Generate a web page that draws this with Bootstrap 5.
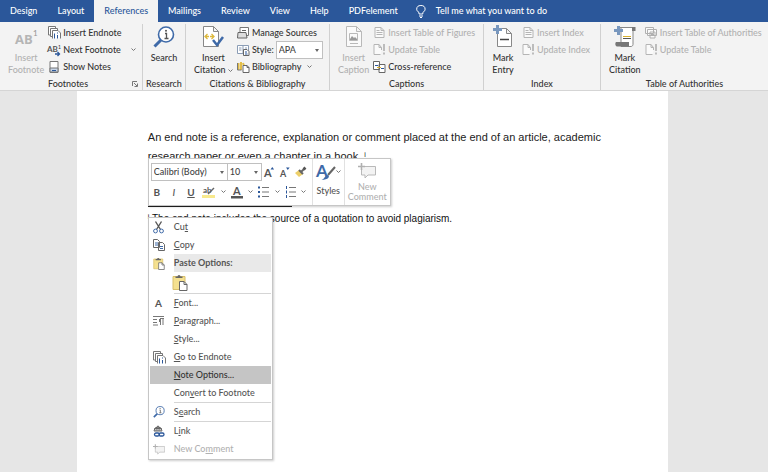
<!DOCTYPE html>
<html lang="en">
<head>
<meta charset="utf-8">
<meta name="viewport" content="width=device-width, initial-scale=1">
<title>Document - Word</title>
<link href="https://cdn.jsdelivr.net/npm/bootstrap@5.3.0/dist/css/bootstrap.min.css" rel="stylesheet">
<style>
:root{--blue:#2b579a;--dim:#b1b1b1}
body{font:9px/12px Lato,"Open Sans",sans-serif;font-weight:500;color:#333;background:#e6e6e6;min-height:100vh}
button{font:inherit;color:inherit;background:none;border:0;padding:0;white-space:nowrap}
button:disabled{color:var(--dim)}
svg{display:block;flex:none;overflow:visible}
.tabs{background:var(--blue);height:22px}
.tabs .nav-link{color:#fff;padding:0 10px;line-height:22px;font-size:9px;border-radius:0;white-space:nowrap}
.tabs .nav-link.active{background:#f3f3f3;color:var(--blue)}
.tell{color:#fff;line-height:22px;gap:10px}
.ribbon{background:#f3f3f3;border-bottom:1px solid #d5d5d5;padding:2px 0 0}
.group{border-right:1px solid #d0d0d0;min-height:66px;padding:0 4px}
.group:last-child{border-right:0}
.g-notes{flex:0 0 143px}.g-research{flex:0 0 43px}.g-cite{flex:0 0 144px}.g-cap{flex:0 0 154px}.g-index{flex:0 0 117px}
.group-title{font-size:9px;line-height:12px;text-align:center}
.cmd-list button,.cmd-row{height:17px;display:flex;align-items:center;gap:2px}
.big{display:flex;flex-direction:column;align-items:center;line-height:12px}
.ribbon .big>svg{margin-bottom:1px}
.pick{position:relative}
.pick::after{content:"";position:absolute;right:4px;top:50%;margin-top:-1px;border:2px solid transparent;border-top:3px solid #666;border-bottom:0;pointer-events:none}
.pick select{appearance:none;border:1px solid #c0c0c0;background:#fff;color:#444;font:inherit;height:18px;padding:0 2px;border-radius:0;width:100%}
.cite-pick{width:47px}
.page{background:#fff;margin-left:10%;width:77%;min-height:calc(100vh - 91px);position:relative;padding:37px 60px 0 71px;font-family:"Liberation Sans",Arial,sans-serif;color:#222}
.body-text{font-size:11px;line-height:19px;margin:0}
.body-text sup,.note sup{font-size:7px}
.rule{width:144px;border-top:1px solid #222;margin:40px 0 6px}
.note{font-size:10px;margin:0;line-height:12px;color:#111}
.floating{position:absolute;background:#fff;border:1px solid #c6c6c6;box-shadow:1px 1px 2px #0003;font-family:Lato,"Open Sans",sans-serif;color:#555}
.mini{left:71px;top:67px;width:243px;height:48px}
.mini-edit{width:163px;padding:4px 2px 0}
.mini-row{height:18px}
.mini-row+.mini-row{margin-top:2px}
.mini-row .glyph{width:12px;text-align:center;font-size:10px}
.f-name{width:77px}.f-size{width:35px;margin-left:-1px}
.mini-part{border-left:1px solid #e1e1e1}
.styles{width:32px}
.comment-label{line-height:10px;margin-top:3px}
.menu{left:71px;top:126px;width:125px;padding:0 1px 1px}
.menu button,.menu .heading{display:flex;align-items:center;height:18px;width:100%;text-align:left}
.menu .ico{width:24px;display:flex;padding-left:3px;flex:none}
.menu .heading b{background:#e9e9e9;flex:1;line-height:18px;color:#555}
.menu .chosen{background:#c5c5c5;color:#333}
.menu .paste{height:21px;padding-left:22px}
.menu hr{margin:0 0 0 24px;border-top:1px solid #d5d5d5;opacity:1}
</style>
<script src="https://cdn.jsdelivr.net/npm/bootstrap@5.3.0/dist/js/bootstrap.bundle.min.js"></script>
</head>
<body>
<svg width="0" height="0" class="position-absolute" aria-hidden="true">
<defs>
<symbol id="endnote" viewBox="0 0 13 13"><g fill="#fff" stroke="#777"><path d="M3 9H.5V.5h7V2M5 10.500H2.500v-8h7V4"/><path d="M4.500 12.500v-8H10l2.500 2.500v5.500"/></g><path d="M6.500 7.500v5M9.500 9v3.500" stroke="#2b579a"/><path d="M9 7h1" stroke="#2b579a"/></symbol>
<symbol id="drop" viewBox="0 0 5 4"><path d="M.5.5l2 2 2-2" fill="none" stroke="#777"/></symbol>
<symbol id="magnify" viewBox="0 0 22 22"><path d="M1.500 20.500L8 14" stroke="#3f6aa8" stroke-width="3"/><circle cx="13" cy="8.500" r="7.500" fill="#fff" stroke="#3f6aa8" stroke-width="1.600"/><path d="M12 7.500h1.500v5M11.500 12.500h4" stroke="#555" fill="none" stroke-width="1.300"/><circle cx="13" cy="4.800" r="1" fill="#555"/></symbol>
<symbol id="doc" viewBox="0 0 10 11"><path d="M.5.500h6l3 3v7h-9zM6.500.500v3h3" fill="#fafafa" stroke="#b5b5b5"/><path d="M2 5.500h6M2 7.500h6M2 3.500h3" stroke="#b5b5b5"/></symbol>
<symbol id="update" viewBox="0 0 12 11"><path d="M7 10.500H.5V.500h5l2.500 3V6M5.500.500v3H8" fill="#fafafa" stroke="#b5b5b5"/><path d="M10.500 0v7M10.500 8.500v2" stroke="#aaa" stroke-width="1.500"/></symbol>
<symbol id="clip" viewBox="0 0 16 17"><path d="M1 2.500h12v13H1z" fill="#f4e08f" stroke="#d9c06c"/><path d="M3.500 4V2.500H5.500a1.500 1.500 0 0 1 3 0h2V4z" fill="#666"/><path d="M7.500 7.500h4.500l3 3v6H7.500z" fill="#fff" stroke="#666"/><path d="M12 7.500v3h3" fill="none" stroke="#666"/></symbol>
<symbol id="comment" viewBox="0 0 18 16"><path d="M6 3.500h11.500v8.500H10l-3 3v-3H3.500V7" fill="#f3f3f3" stroke="#b9b9b9"/><path d="M3.500 0v7M0 3.500h7" stroke="#b0b0b0" stroke-width="1.600"/></symbol>
<symbol id="plusmark" viewBox="0 0 9 9"><path d="M4.500 0v9M0 4.500h9" stroke="#7897be" stroke-width="3"/></symbol>
</defs></svg>

<header>
<nav class="tabs nav flex-nowrap" aria-label="Ribbon tabs">
<a class="nav-link" href="#">Design</a><a class="nav-link" href="#">Layout</a><a class="nav-link active" href="#" aria-current="page">References</a><a class="nav-link" href="#">Mailings</a><a class="nav-link" href="#">Review</a><a class="nav-link" href="#">View</a><a class="nav-link" href="#">Help</a><a class="nav-link" href="#">PDFelement</a>
<button class="tell d-flex align-items-center ms-2" type="button"><svg width="10" height="13" viewBox="0 0 10 13" fill="none" stroke="#fff"><path d="M3 9V7.500C1.500 6.500.7 5.500.7 4.200a4.200 3.700 0 0 1 8.400 0c0 1.300-.8 2.300-2.300 3.300V9zM3 11h4M4 12.500h2"/></svg>Tell me what you want to do</button>
</nav>
<div class="ribbon d-flex">
<section class="group g-notes d-flex flex-column justify-content-between">
 <div class="d-flex gap-1">
  <button class="big ms-1" type="button" disabled><svg width="22" height="27" viewBox="0 0 22 27"><text x="0" y="20" font-size="13" font-family="Open Sans" font-weight="700" fill="#b5b5b5">AB</text><text x="18" y="12" font-size="8" fill="#999">1</text></svg><span>Insert<br>Footnote</span></button>
  <div class="cmd-list">
   <button type="button"><svg width="13" height="13"><use href="#endnote"/></svg>Insert Endnote</button>
   <button type="button"><svg width="13" height="12" viewBox="0 0 13 12"><text x="-1" y="8" font-size="8" font-weight="700" fill="#555">AB</text><text x="10" y="5" font-size="5" fill="#333">1</text><path d="M7 10h4M9.500 8l2 2-2 2" fill="none" stroke="#2b579a" stroke-width="1.300"/></svg>Next Footnote<svg class="ms-2" width="5" height="4"><use href="#drop"/></svg></button>
   <button type="button"><svg width="13" height="12" viewBox="0 0 13 12"><path d="M2 .500h8v11H2z" fill="#fff" stroke="#777"/><path d="M2 7h8v4H2z" fill="#c7d5e8" stroke="#777"/><path d="M4 9.500h4" stroke="#2b579a"/></svg>Show Notes</button>
  </div>
 </div>
 <div class="d-flex align-items-center"><span class="group-title flex-fill">Footnotes</span><button type="button" aria-label="Footnote settings"><svg width="6" height="6" viewBox="0 0 6 6" fill="none" stroke="#777"><path d="M.5 5V.500H5M2 2l3 3M5.500 2.500v3h-3"/></svg></button></div>
</section>
<section class="group g-research d-flex flex-column justify-content-between px-0">
 <button class="big" type="button"><svg width="22" height="27" viewBox="0 -2 22 27"><use href="#magnify" width="22" height="22"/></svg>Search</button>
 <span class="group-title">Research</span>
</section>
<section class="group g-cite d-flex flex-column justify-content-between">
 <div class="d-flex gap-1">
  <button class="big ms-1" type="button"><svg width="22" height="27" viewBox="0 0 22 27"><path d="M1.500 2.500h10l5 5v15h-15zM11.500 2.500v5h5" fill="#fff" stroke="#888"/><path d="M3 12.500h4M12 12.500h-4M5.500 10l-2.500 2.500 2.500 2.500M9.500 10l2.500 2.500-2.500 2.500" fill="none" stroke="#dcb83c" stroke-width="1.300"/><path d="M11 16l4 5 6-8" fill="none" stroke="#3f6aa8" stroke-width="2.500"/></svg><span>Insert<br>Citation <svg class="d-inline-block" width="5" height="4"><use href="#drop"/></svg></span></button>
  <div class="cmd-list">
   <button type="button"><svg width="13" height="12" viewBox="0 0 13 12"><path d="M3 .500h8.500v8H3z" fill="#fff" stroke="#777"/><path d="M5 3.500h4M1 5.500h8l1 5.500H.5z" fill="#ddd" stroke="#666"/></svg>Manage Sources</button>
   <div class="cmd-row"><svg width="13" height="12" viewBox="0 0 13 12"><path d="M.5 1.500h11v8H.5zM6 1.500v8M2 4h2.500M2 6h2.500M8 4h2" fill="#fff" stroke="#8a9cb5"/><path d="M6.500 5.500h3.500l2 2v4H6.500z" fill="#fff" stroke="#666"/><path d="M8 8h2M8 10h2.500" stroke="#2b579a"/></svg><label for="cite-style">Style:</label><span class="pick cite-pick"><select id="cite-style"><option>APA</option></select></span></div>
   <button type="button"><svg width="13" height="12" viewBox="0 0 13 12"><path d="M1.500 2v7M4 1v8M6 2l1 3" stroke="#e2bd48" stroke-width="2"/><path d="M.5 2v7h4" fill="none" stroke="#777"/><path d="M6 4.500h4l2 2v5H6zM10 4.500v2h2" fill="#fff" stroke="#666"/></svg>Bibliography<svg class="ms-1" width="5" height="4"><use href="#drop"/></svg></button>
  </div>
 </div>
 <span class="group-title">Citations &amp; Bibliography</span>
</section>
<section class="group g-cap d-flex flex-column justify-content-between">
 <div class="d-flex gap-1">
  <button class="big ms-1" type="button" disabled><svg width="18" height="27" viewBox="0 0 18 27"><path d="M1.500 2.500h10l5 5v15h-15zM11.500 2.500v5h5M4.500 9.500h8v7h-8zM5 19.500h8" fill="#fafafa" stroke="#b9b9b9"/><path d="M5 15l2-3 2 2 1-1 2 2v1H5z" fill="#999"/></svg><span>Insert<br>Caption</span></button>
  <div class="cmd-list">
   <button type="button" disabled><svg width="13" height="11"><use href="#doc"/></svg>Insert Table of Figures</button>
   <button type="button" disabled><svg width="13" height="11"><use href="#update"/></svg>Update Table</button>
   <button type="button"><svg width="13" height="12" viewBox="0 0 13 12"><path d="M.5.500h6v8h-6zM6 3.500h6v8H6z" fill="#fff" stroke="#666"/><path d="M2 4.500h3M8 7.500h3" stroke="#2b579a"/><path d="M4 6.500h4" stroke="#d8b12f"/></svg>Cross-reference</button>
  </div>
 </div>
 <span class="group-title">Captions</span>
</section>
<section class="group g-index d-flex flex-column justify-content-between">
 <div class="d-flex gap-1">
  <button class="big ms-1" type="button"><svg width="22" height="27" viewBox="0 0 22 27"><path d="M5.500 4.500h9l5 5v13h-14zM14.500 4.500v5h5" fill="#fff" stroke="#888"/><path d="M8 15.500h9" stroke="#444" stroke-width="1.500"/><use href="#plusmark" x="1" y="1" width="9" height="9"/></svg><span>Mark<br>Entry</span></button>
  <div class="cmd-list ms-1">
   <button type="button" disabled><svg width="13" height="11"><use href="#doc"/></svg>Insert Index</button>
   <button type="button" disabled><svg width="13" height="11"><use href="#update"/></svg>Update Index</button>
  </div>
 </div>
 <span class="group-title">Index</span>
</section>
<section class="group flex-fill d-flex flex-column justify-content-between">
 <div class="d-flex gap-1">
  <button class="big ms-1" type="button"><svg width="22" height="27" viewBox="0 0 22 27"><path d="M6 3.500h15c-2 0-2 2-2 3v14c0 1-1 2-2 2H7V4" fill="#fff" stroke="#888"/><path d="M18 3h3.500v4H18zM2 18h13v4.500H3C1 22 1 19 2 18z" fill="#777"/><path d="M9 12.500h8" stroke="#d8b12f"/><path d="M9 14.500h8" stroke="#555"/><use href="#plusmark" x="0" y="2" width="9" height="9"/></svg><span>Mark<br>Citation</span></button>
  <div class="cmd-list">
   <button type="button" disabled><svg width="13" height="12" viewBox="0 0 13 12" fill="#fafafa" stroke="#b0b0b0"><path d="M.5.500h8v6h-8zM2.500 2.500h9v6h-9zM5 5h5v6H5zM6 7.500h3"/></svg>Insert Table of Authorities</button>
   <button type="button" disabled><svg width="13" height="11"><use href="#update"/></svg>Update Table</button>
  </div>
 </div>
 <span class="group-title">Table of Authorities</span>
</section>
</div>
</header>

<main class="page">
<p class="body-text">An end note is a reference, explanation or comment placed at the end of an article, academic research paper or even a chapter in a book. <sup>i</sup></p>
<div class="rule"></div>
<p class="note"><sup>i</sup> The end note includes the source of a quotation to avoid plagiarism.</p>

<div class="floating mini d-flex" role="toolbar" aria-label="Formatting">
 <div class="mini-edit">
  <div class="mini-row d-flex align-items-center">
   <span class="pick f-name"><select aria-label="Font"><option>Calibri (Body)</option></select></span>
   <span class="pick f-size"><select aria-label="Font size"><option>10</option></select></span>
   <div class="d-flex flex-fill justify-content-around align-items-center">
   <button type="button" aria-label="Grow font"><svg width="10" height="12" viewBox="0 0 10 12"><text x="0" y="11" font-size="11" font-weight="700" fill="#555">A</text><path d="M6.500 3.500L8.300 1l1.800 2.500z" fill="#2b579a"/></svg></button>
   <button type="button" aria-label="Shrink font"><svg width="10" height="12" viewBox="0 0 10 12"><text x="0" y="11" font-size="9" font-weight="700" fill="#555">A</text><path d="M6 1.500L7.800 4l1.800-2.500z" fill="#2b579a"/></svg></button>
   <button type="button" aria-label="Format painter"><svg width="12" height="12" viewBox="0 0 12 12"><path d="M0 7l4-3 4 4-4 3z" fill="#edcf69"/><path d="M4 4l4 4M6 6l4-4" stroke="#666" stroke-width="2"/><path d="M8.500 1.500l2 2" stroke="#555" stroke-width="2.500"/></svg></button>
   </div>
  </div>
  <div class="mini-row d-flex align-items-center justify-content-between pe-1">
   <button class="glyph" type="button"><b>B</b></button><button class="glyph" type="button"><i>I</i></button><button class="glyph" type="button"><u><b>U</b></u></button>
   <button type="button" aria-label="Highlight"><svg width="14" height="13" viewBox="0 0 14 13"><text x="1" y="7" font-size="8" font-weight="700" fill="#555">ab</text><path d="M6 8l6-6" stroke="#666" stroke-width="1.500"/><path d="M0 9h13v3H0z" fill="#f8e98d"/></svg></button><svg width="5" height="4"><use href="#drop"/></svg>
   <button type="button" aria-label="Font color"><svg width="12" height="13" viewBox="0 0 12 13"><text x="2" y="9" font-size="11" font-weight="700" fill="#555">A</text><path d="M0 10h12v2.500H0z" fill="#555"/></svg></button><svg width="5" height="4"><use href="#drop"/></svg>
   <button type="button" aria-label="Bullets"><svg width="11" height="12" viewBox="0 0 11 12"><path d="M0 1.500h2M0 6h2M0 10.500h2" stroke="#2b579a" stroke-width="2"/><path d="M4 1.500h7M4 6h7M4 10.500h7" stroke="#777"/></svg></button><svg width="5" height="4"><use href="#drop"/></svg>
   <button type="button" aria-label="Numbering"><svg width="11" height="12" viewBox="0 0 11 12"><path d="M1.500 0v3M1.500 4.500v3M1.500 9v3" stroke="#2b579a"/><path d="M4 1.500h7M4 6h7M4 10.500h7" stroke="#777"/></svg></button><svg width="5" height="4"><use href="#drop"/></svg>
  </div>
 </div>
 <button class="mini-part styles big pt-1" type="button"><span class="d-flex align-items-center pb-1"><svg width="20" height="18" viewBox="0 0 20 18"><text x="0" y="14" font-size="17" font-weight="700" fill="#3f6aa8">A</text><path d="M19 4l-7 8" stroke="#666" stroke-width="2"/><path d="M5 17c3 0 4-5 7-5 2 1 1 5-7 5z" fill="#3f6aa8"/></svg><svg width="5" height="4"><use href="#drop"/></svg></span>Styles</button>
 <button class="mini-part big flex-fill pt-1" type="button" disabled><svg width="18" height="16"><use href="#comment"/></svg><span class="comment-label">New<br>Comment</span></button>
</div>

<div class="floating menu" role="menu">
 <button type="button" role="menuitem"><span class="ico"><svg width="11" height="13" viewBox="0 0 11 13" fill="none"><path d="M2.500.500l5 8M8.500.500l-5 8" stroke="#555" stroke-width="1.400"/><circle cx="2.500" cy="10" r="1.900" stroke="#3f6aa8"/><circle cx="8.500" cy="10" r="1.900" stroke="#3f6aa8"/></svg></span><span>Cu<u>t</u></span></button>
 <button type="button" role="menuitem"><span class="ico"><svg width="12" height="12" viewBox="0 0 12 12" fill="#fff" stroke="#666"><path d="M.5.500h4l2 2v6h-6zM5.500 3.500h4l2 2v6h-6z"/><path d="M2 4h3M2 6h3M7 7.500h3M7 9.500h3" stroke="#3f6aa8"/></svg></span><span><u>C</u>opy</span></button>
 <div class="heading"><span class="ico"><svg width="12" height="13"><use href="#clip"/></svg></span><b>Paste Options:</b></div>
 <button class="paste" type="button" role="menuitem" aria-label="Keep source formatting"><svg width="16" height="17"><use href="#clip"/></svg></button>
 <hr>
 <button type="button" role="menuitem"><span class="ico"><svg width="12" height="12" viewBox="0 0 12 12"><text x="2" y="10" font-size="10" font-weight="700" fill="#555">A</text></svg></span><span><u>F</u>ont...</span></button>
 <button type="button" role="menuitem"><span class="ico"><svg width="12" height="10" viewBox="0 0 12 10" fill="none" stroke="#777"><path d="M0 .500h11M0 3.500h4M0 6.500h4M0 9h5M7.500 9V3M10 9V3M11 2.500H7"/><path d="M6 4.500h1" stroke-width="3"/></svg></span><span><u>P</u>aragraph...</span></button>
 <button type="button" role="menuitem"><span class="ico"></span><span><u>S</u>tyle...</span></button>
 <button type="button" role="menuitem"><span class="ico"><svg width="13" height="13"><use href="#endnote"/></svg></span><span><u>G</u>o to Endnote</span></button>
 <button class="chosen" type="button" role="menuitem"><span class="ico"></span><span><u>N</u>ote Options...</span></button>
 <button type="button" role="menuitem"><span class="ico"></span><span>Con<u>v</u>ert to Footnote</span></button>
 <hr>
 <button type="button" role="menuitem"><span class="ico"><svg width="12" height="12"><use href="#magnify"/></svg></span><span>S<u>e</u>arch</span></button>
 <hr>
 <button type="button" role="menuitem"><span class="ico"><svg width="12" height="12" viewBox="0 0 12 12" fill="none"><path d="M1 6a4 4 0 1 1 8 0M1 6h8M1.500 3.500h7M5 1v5M3 6c0-3 1-5 2-5s2 2 2 5" stroke="#666"/><rect x="1.500" y="8" width="5" height="3" rx="1.500" stroke="#2b579a" stroke-width="1.300"/><rect x="6" y="8" width="5" height="3" rx="1.500" stroke="#2b579a" stroke-width="1.300"/></svg></span><span>L<u>i</u>nk</span></button>
 <button type="button" role="menuitem" disabled><span class="ico"><svg width="12" height="11"><use href="#comment"/></svg></span><span>New Co<u>m</u>ment</span></button>
</div>
</main>
</body>
</html>
